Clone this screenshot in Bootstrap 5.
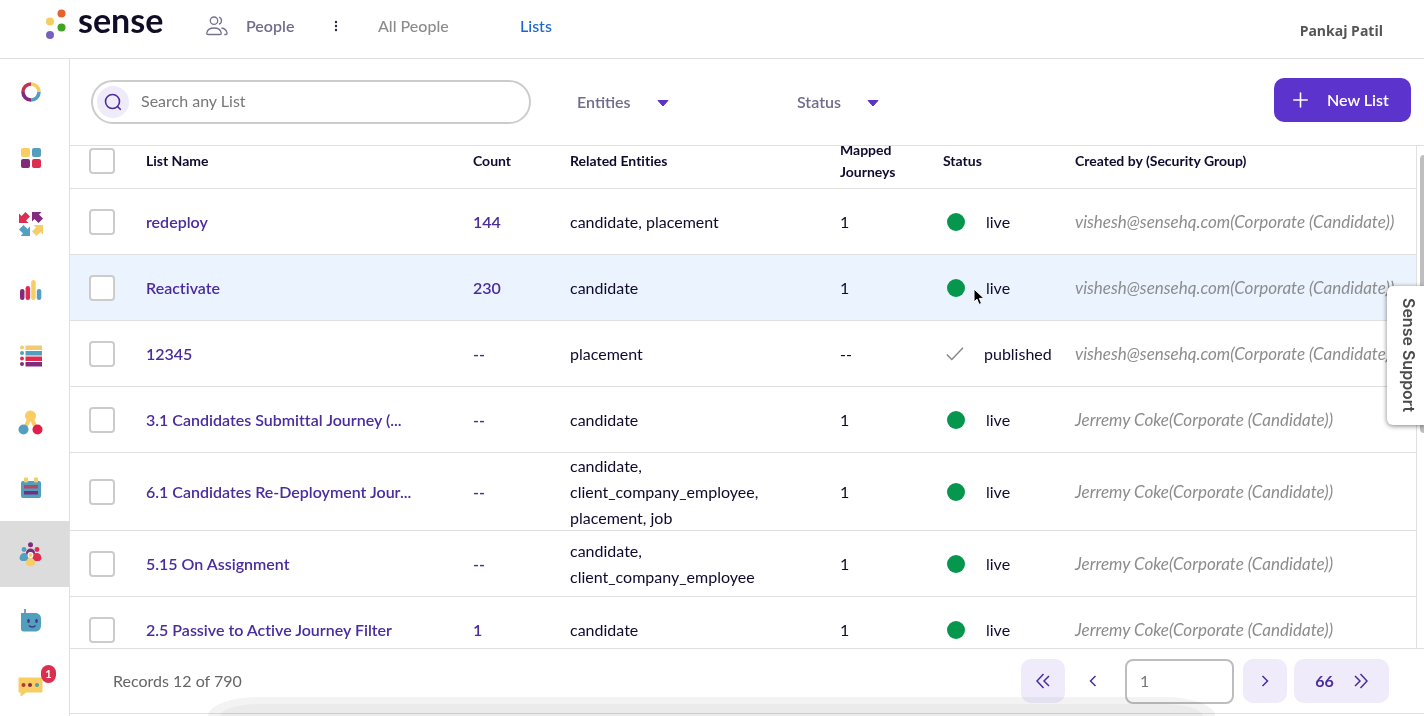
<!DOCTYPE html>
<html lang="en">
<head>
<meta charset="utf-8">
<meta name="viewport" content="width=device-width, initial-scale=1">
<title>Sense - Lists</title>
<link href="https://cdn.jsdelivr.net/npm/bootstrap@5.3.0/dist/css/bootstrap.min.css" rel="stylesheet">
<style>
  :root { --line: #e0e0e0; --ink: #0f0a2e; --violet: #4a2c9e; --mute: #706c8c; --soft: #efebfb; }
  body { font-family: Lato, sans-serif; font-size: 16px; color: var(--ink); background: #fff; font-variant-ligatures: none; }
  a { text-decoration: none; }
  button { border: 0; }

  .topbar { height: 59px; border-bottom: 1px solid var(--line); padding: 0 41px 0 45px; }
  .brand { gap: 12px; width: 161px; height: 42px; color: #100c26; }
  .brand-name { font-size: 34px; line-height: 40px; font-weight: 700; }
  .crumbs { height: 52px; font-weight: 600; }
  .crumb-people { gap: 18px; width: 127px; color: var(--mute); }
  .crumb-more { width: 45px; padding: 0; background: none; text-align: left; }
  .crumb-all { width: 142px; color: #8c8c8c; font-weight: 500; }
  .crumb-lists { color: #1a66cf; font-weight: 500; }
  .user-name { color: #555; font-family: "Open Sans", sans-serif; font-size: 14px; font-weight: 700; padding-top: 3px; }

  .page-body, .list-area { min-height: 0; }
  .page-main { min-width: 0; }

  .sidebar { width: 70px; border-right: 1px solid var(--line); }
  .side-item { height: 66px; padding-right: 8px; position: relative; }
  .side-item.current { background: #dcdcdc; }
  .alert-count { position: absolute; left: 41px; top: 12px; width: 15px; height: 18px; border-radius: 8px; background: #dc2f50; color: #fff; font-size: 11px; font-weight: 700; line-height: 18px; text-align: center; }

  .toolbar { height: 87px; border-bottom: 1px solid var(--line); padding: 0 13px 0 21px; }
  .search-box { width: 440px; height: 44px; border: 2px solid #ccc; border-radius: 22px; padding: 0 16px 0 4px; gap: 12px; margin-right: 46px; }
  .search-box input { border: 0; outline: 0; min-width: 0; color: #666; font-size: 16px; padding: 0 0 2px; }
  .search-box input::placeholder, .page-no::placeholder { color: #777; opacity: 1; }
  .search-dot { width: 32px; height: 32px; border-radius: 50%; background: var(--soft); }
  .filter { width: 220px; }
  .filter select { appearance: none; border: 0; padding: 0 38px 0 0; font-weight: 600; color: var(--mute);
    background: url("data:image/svg+xml,%3Csvg xmlns='http://www.w3.org/2000/svg' width='12' height='8'%3E%3Cpath d='M1 1.500h10L6 7z' fill='%235b34c4' stroke='%235b34c4' stroke-linejoin='round'/%3E%3C/svg%3E") no-repeat right 9px; }
  .new-list { width: 137px; height: 44px; border-radius: 10px; background: #5c33cc; color: #fff; font-weight: 600; padding: 0 0 0 19px; gap: 19px; }

  .list-area { padding-right: 7px; }
  .list-frame { overflow: hidden; border-right: 1px solid var(--line); }
  .lists { width: 100%; table-layout: fixed; border-collapse: separate; border-spacing: 0; margin-top: -12px; }
  .lists th, .lists td { padding: 0; box-shadow: inset 0 -1px var(--line); white-space: nowrap; }
  .lists th { height: 55px; padding-bottom: 2px; font-size: 14px; line-height: 22px; font-weight: 700; white-space: normal; }
  .lists td { height: 66px; line-height: 26px; }
  .lists td:nth-child(4) { white-space: normal; }
  .lists tr.hovered td { background: #ebf3ff; }
  .lists a { color: var(--violet); font-weight: 600; }
  .lists td:last-child { color: #8c8c8c; font-size: 17px; font-style: italic; }
  .c-check { width: 76px; } .c-name { width: 327px; } .c-count { width: 97px; }
  .c-entities { width: 270px; } .c-journeys { width: 103px; } .c-status { width: 132px; }
  .tick { appearance: none; display: block; width: 26px; height: 26px; margin: 0 0 0 19px; border: 2px solid #ccc; border-radius: 4px; background: #fff; }
  .live { gap: 21px; padding-left: 4px; }
  .live::before { content: ""; width: 18px; height: 18px; border-radius: 50%; background: #07964d; }
  .published { gap: 20px; padding-left: 3px; }
  .scroll-thumb { position: absolute; right: 0; top: 9px; width: 4px; height: 278px; background: #bfbfbf; border-radius: 4px 0 0 4px; }

  .pager { height: 66px; border-top: 1px solid var(--line); border-bottom: 1px solid var(--line); padding: 0 35px 0 43px; margin-bottom: 2px; position: relative; color: #666; }
  .page-btn { width: 44px; height: 44px; border-radius: 10px; background: var(--soft); color: var(--violet); padding: 0; }
  .page-btn.plain { background: none; width: 56px; }
  .page-btn.wide { width: 95px; gap: 20px; font-weight: 700; margin-left: 7px; }
  .page-no { width: 109px; height: 45px; border: 2px solid #bdbdbd; border-radius: 8px; padding: 0 13px 2px; color: #777; margin: 0 9px 0 4px; }
  .dock-shade { position: absolute; left: 138px; right: 209px; top: 48px; height: 19px; overflow: hidden; pointer-events: none; mix-blend-mode: multiply; background: #f3f3f3; border-radius: 50px 50px 0 0 / 19px 19px 0 0; }
  .dock-shade::after { content: ""; position: absolute; inset: 7px 12px 0; background: #ebebeb; border-radius: 40px 40px 0 0 / 12px 12px 0 0; }

  .support { position: fixed; right: 0; top: 286px; width: 37px; height: 139px; padding: 0 0 0 6px; background: #fff; color: #4a4a4a; border-radius: 6px 0 0 6px; box-shadow: 0 1px 5px rgba(0,0,0,.5); writing-mode: vertical-rl; font: 600 16px Inter, sans-serif; line-height: 30px; }
  .pointer { position: absolute; left: 903px; top: 142px; }
</style>
</head>
<body>
<div class="d-flex flex-column vh-100 overflow-hidden">
  <header class="topbar d-flex justify-content-between flex-shrink-0">
    <div class="d-flex">
      <a href="#" class="brand d-flex">
        <svg width="21" height="42" viewBox="0 0 21 42"><circle cx="16.500" cy="13.500" r="4" fill="#e4622c"/><circle cx="5" cy="21.500" r="4" fill="#f7cd62"/><circle cx="16.500" cy="27.500" r="4" fill="#41a322"/><circle cx="5" cy="35" r="4" fill="#7860c3"/></svg>
        <span class="brand-name">sense</span>
      </a>
      <nav class="crumbs d-flex align-items-center">
        <a href="#" class="crumb-people d-flex align-items-center">
          <svg width="22" height="20" viewBox="0 0 22 20" fill="none" stroke="#77738f" stroke-width="1.300"><circle cx="8" cy="4.700" r="3.700"/><path d="M2 18.500h12c1 0 1.400-.7 1.200-1.600-.6-3-3-4.900-7.200-4.900S1.400 13.900.8 16.900c-.2.900.2 1.600 1.200 1.600zM13 1.200a3.700 3.700 0 0 1 0 7M15.500 12c3 .4 4.900 2 5.500 4.900.2 1-.2 1.600-1.200 1.600h-1.500"/></svg>
          <span>People</span>
        </a>
        <button class="crumb-more" aria-label="More"><svg width="6" height="12" viewBox="0 0 6 12" class="d-block"><g fill="#28243c"><circle cx="3" cy="2" r="1.200"/><circle cx="3" cy="6" r="1.200"/><circle cx="3" cy="10" r="1.200"/></g></svg></button>
        <a href="#" class="crumb-all">All People</a>
        <a href="#" class="crumb-lists">Lists</a>
      </nav>
    </div>
    <div class="user-name d-flex align-items-center">Pankaj Patil</div>
  </header>

  <div class="page-body d-flex flex-fill">
    <nav class="sidebar flex-shrink-0">
      <a href="#" class="side-item d-flex align-items-center justify-content-center" aria-label="Home">
        <svg width="22" height="22" viewBox="0 0 22 22" fill="none" stroke-width="3.600"><path d="M11 3a8 8 0 0 1 8 8" stroke="#f8cd63"/><path d="M19 11a8 8 0 0 1-8 8" stroke="#549fc0"/><path d="M11 19a8 8 0 0 1-8-8" stroke="#822b7c"/><path d="M3 11a8 8 0 0 1 8-8" stroke="#c5344f"/></svg></a>
      <a href="#" class="side-item d-flex align-items-center justify-content-center" aria-label="Dashboard">
        <svg width="20" height="20" viewBox="0 0 20 20"><rect width="9" height="9" rx="2" fill="#f8cd63"/><rect x="11" width="9" height="9" rx="2" fill="#549fc0"/><rect y="11" width="9" height="9" rx="2" fill="#822b7c"/><rect x="11" y="11" width="9" height="9" rx="2" fill="#df2d50"/></svg></a>
      <a href="#" class="side-item d-flex align-items-center justify-content-center" aria-label="Journeys">
        <svg width="26" height="26" viewBox="0 0 26 26"><path d="M1 12V2.500L3.500 5 7.500 1l4.500 4.500-4 4 2.500 2.500z" fill="#df2d50"/><path d="M14 1h9.500L21 3.500l4 4L20.500 12l-4-4L14 10.500z" fill="#822b7c"/><path d="M12 25H2.500L5 22.500l-4-4L5.500 14l4 4 2.500-2.500z" fill="#549fc0"/><path d="M25 14v9.500L22.500 21l-4 4L14 20.500l4-4-2.500-2.500z" fill="#f8cd63"/></svg></a>
      <a href="#" class="side-item d-flex align-items-center justify-content-center" aria-label="Analytics">
        <svg width="22" height="20" viewBox="0 0 22 20"><rect y="9" width="4.500" height="11" rx="2.200" fill="#822b7c"/><rect x="5.600" y="6" width="4.500" height="14" rx="2.200" fill="#df2d50"/><rect x="11.200" width="4.500" height="20" rx="2.200" fill="#f8cd63"/><rect x="16.800" y="9" width="4.500" height="11" rx="2.200" fill="#549fc0"/></svg></a>
      <a href="#" class="side-item d-flex align-items-center justify-content-center" aria-label="Surveys">
        <svg width="22" height="22" viewBox="0 0 22 22"><g fill="#efcb73"><circle cx="2" cy="2.500" r="2"/><path d="M5.500.5H22v4.500H5.500z"/></g><g fill="#549fc0"><circle cx="2" cy="8" r="2"/><path d="M5.500 6H22v4.500H5.500z"/></g><g fill="#df2d50"><circle cx="2" cy="13.500" r="2"/><path d="M5.500 11.500H22V16H5.500z"/></g><g fill="#822b7c"><circle cx="2" cy="19" r="2"/><path d="M5.500 17H22v4.500H5.500z"/></g></svg></a>
      <a href="#" class="side-item d-flex align-items-center justify-content-center" aria-label="Referrals">
        <svg width="25" height="25" viewBox="0 0 25 25"><path d="M8 16l4.500-10L17 16" fill="none" stroke="#f8cd63" stroke-width="4"/><circle cx="12.500" cy="6" r="5.500" fill="#f8cd63"/><circle cx="5.500" cy="19.500" r="5" fill="#549fc0"/><circle cx="19.500" cy="19.500" r="5" fill="#df2048"/></svg></a>
      <a href="#" class="side-item d-flex align-items-center justify-content-center" aria-label="Calendar">
        <svg width="20" height="22" viewBox="0 0 20 22"><rect y="4" width="20" height="17" rx="2" fill="#4f9fbd"/><path d="M3 8h14v3.500H3z" fill="#b74767"/><path d="M3 14h14v3.500H3z" fill="#6e3186"/><path d="M3.500 1h3v4h-3zM13.500 1h3v4h-3z" fill="#f3cc6b" stroke="#f3cc6b"/></svg></a>
      <a href="#" class="side-item current d-flex align-items-center justify-content-center" aria-label="People">
        <svg width="23" height="25" viewBox="0 0 23 25"><g fill="#822b7c"><circle cx="11.500" cy="2.800" r="2.500"/><path d="M7 11c0-6 9-6 9 0l-1 3H8z"/></g><g fill="#549fc0"><circle cx="5" cy="7.500" r="2.400"/><path d="M.5 17c0-8 9-8 9-.5L7 19H2.500z"/></g><g fill="#df2d50"><circle cx="18" cy="7.500" r="2.400"/><path d="M22.500 17c0-8-9-8-9-.5L16 19h4.500z"/></g><circle cx="11.500" cy="13" r="3" fill="#fff"/><circle cx="11.500" cy="13" r="2" fill="#f8cd63"/><path d="M7 21.500c0-7 9-7 9 0 0 3.500-9 3.500-9 0z" fill="#f8cd63"/></svg></a>
      <a href="#" class="side-item d-flex align-items-center justify-content-center" aria-label="Chatbot">
        <svg width="20" height="24" viewBox="0 0 20 24"><path d="M0 5h14c4 0 6 2.500 6 6v6c0 4-2 6.500-6 6.500H2.500C1 23.500 0 22.500 0 21z" fill="#4f9fbd"/><path d="M4 5V1" stroke="#4f7fa5" stroke-width="1.500"/><ellipse cx="7.500" cy="13" rx="1.300" ry="2" fill="#4b2e83"/><ellipse cx="15.500" cy="13" rx="1.300" ry="2" fill="#4b2e83"/><path d="M8 17.500c1.500 2 5 2 6.500 0" fill="none" stroke="#4b2e83" stroke-width="1.300"/></svg></a>
      <a href="#" class="side-item d-flex align-items-center justify-content-center" aria-label="Messages">
        <svg width="25" height="19" viewBox="0 0 25 19"><path d="M1 1h23v14H8l-5 4V15H1z" fill="#f8cd63" stroke="#f8cd63" stroke-linejoin="round"/><circle cx="5.500" cy="8" r="2" fill="#b53b3b"/><circle cx="12" cy="8" r="2" fill="#822b4c"/><circle cx="19" cy="8" r="2" fill="#549fa0"/></svg>
        <span class="alert-count">1</span></a>
    </nav>

    <main class="page-main d-flex flex-column flex-fill">
      <div class="toolbar d-flex align-items-center flex-shrink-0">
        <div class="search-box d-flex align-items-center">
          <span class="search-dot d-flex align-items-center justify-content-center flex-shrink-0"><svg width="18" height="18" viewBox="0 0 18 18" fill="none" stroke="#4b2c9e" stroke-width="1.600" stroke-linecap="round"><circle cx="8.500" cy="8.500" r="7"/><path d="M13.500 13.500l2.800 2.800"/></svg></span>
          <input type="search" class="flex-fill" placeholder="Search any List" aria-label="Search any List">
        </div>
        <div class="filter"><select aria-label="Entities"><option>Entities</option></select></div>
        <div class="filter"><select aria-label="Status"><option>Status</option></select></div>
        <button class="new-list d-flex align-items-center ms-auto mb-1">
          <svg width="15" height="16" viewBox="0 0 15 16" stroke="#fff" stroke-width="1.600" stroke-linecap="round"><path d="M7.500 1v14M.8 8h13.400"/></svg>
          <span>New List</span>
        </button>
      </div>

      <div class="list-area d-flex flex-fill position-relative">
        <div class="list-frame flex-fill">
          <table class="lists">
            <colgroup><col class="c-check"><col class="c-name"><col class="c-count"><col class="c-entities"><col class="c-journeys"><col class="c-status"><col></colgroup>
            <thead>
              <tr><th><input type="checkbox" class="tick" aria-label="Select all"></th><th>List Name</th><th>Count</th><th>Related Entities</th><th>Mapped<br>Journeys</th><th>Status</th><th>Created by (Security Group)</th></tr>
            </thead>
            <tbody>
              <tr><td><input type="checkbox" class="tick" aria-label="redeploy"></td><td><a href="#">redeploy</a></td><td><a href="#">144</a></td><td>candidate, placement</td><td>1</td><td><div class="live d-flex align-items-center">live</div></td><td>vishesh@sensehq.com(Corporate (Candidate))</td></tr>
              <tr class="hovered"><td><input type="checkbox" class="tick" aria-label="Reactivate"></td><td><a href="#">Reactivate</a></td><td><a href="#">230</a></td><td>candidate</td><td>1</td><td><div class="live d-flex align-items-center">live</div></td><td>vishesh@sensehq.com(Corporate (Candidate))</td></tr>
              <tr><td><input type="checkbox" class="tick" aria-label="12345"></td><td><a href="#">12345</a></td><td><a href="#">--</a></td><td>placement</td><td>--</td><td><div class="published d-flex align-items-center"><svg width="18" height="14" viewBox="0 0 18 14" fill="none" stroke="#858585" stroke-width="1.400"><path d="M.8 7.500l5 5L17 .8"/></svg>published</div></td><td>vishesh@sensehq.com(Corporate (Candidate))</td></tr>
              <tr><td><input type="checkbox" class="tick" aria-label="3.1 Candidates Submittal Journey"></td><td><a href="#">3.1 Candidates Submittal Journey (...</a></td><td><a href="#">--</a></td><td>candidate</td><td>1</td><td><div class="live d-flex align-items-center">live</div></td><td>Jerremy Coke(Corporate (Candidate))</td></tr>
              <tr><td><input type="checkbox" class="tick" aria-label="6.1 Candidates Re-Deployment Journey"></td><td><a href="#">6.1 Candidates Re-Deployment Jour...</a></td><td><a href="#">--</a></td><td>candidate,<br>client_company_employee,<br>placement, job</td><td>1</td><td><div class="live d-flex align-items-center">live</div></td><td>Jerremy Coke(Corporate (Candidate))</td></tr>
              <tr><td><input type="checkbox" class="tick" aria-label="5.15 On Assignment"></td><td><a href="#">5.15 On Assignment</a></td><td><a href="#">--</a></td><td>candidate,<br>client_company_employee</td><td>1</td><td><div class="live d-flex align-items-center">live</div></td><td>Jerremy Coke(Corporate (Candidate))</td></tr>
              <tr><td><input type="checkbox" class="tick" aria-label="2.5 Passive to Active Journey Filter"></td><td><a href="#">2.5 Passive to Active Journey Filter</a></td><td><a href="#">1</a></td><td>candidate</td><td>1</td><td><div class="live d-flex align-items-center">live</div></td><td>Jerremy Coke(Corporate (Candidate))</td></tr>
            </tbody>
          </table>
        </div>
        <div class="scroll-thumb"></div>
        <svg class="pointer" width="13" height="18" viewBox="0 0 13 18"><path d="M1 1v13l3-2.800 2 5.200 2.500-1-2.100-5H11z" fill="#000" stroke="#fff"/></svg>
      </div>

      <footer class="pager d-flex align-items-center flex-shrink-0">
        <span class="me-auto">Records 12 of 790</span>
        <button class="page-btn d-flex align-items-center justify-content-center" aria-label="First page"><svg width="14" height="16" viewBox="0 0 14 16" fill="none" stroke="currentColor" stroke-width="1.500"><path d="M7.500 1L1 8l6.500 7M13 3L8 8l5 5"/></svg></button>
        <button class="page-btn plain d-flex align-items-center justify-content-center" aria-label="Previous page"><svg width="8" height="12" viewBox="0 0 8 12" fill="none" stroke="currentColor" stroke-width="1.500"><path d="M6.500 1L1.500 6l5 5"/></svg></button>
        <input class="page-no" type="text" placeholder="1" aria-label="Page number">
        <button class="page-btn d-flex align-items-center justify-content-center" aria-label="Next page"><svg width="8" height="12" viewBox="0 0 8 12" fill="none" stroke="currentColor" stroke-width="1.500"><path d="M1.500 1l5 5-5 5"/></svg></button>
        <button class="page-btn wide d-flex align-items-center justify-content-center" aria-label="Last page, 66"><span>66</span><svg width="14" height="16" viewBox="0 0 14 16" fill="none" stroke="currentColor" stroke-width="1.500"><path d="M6.500 1L13 8l-6.500 7M1 3l5 5-5 5"/></svg></button>
        <div class="dock-shade"></div>
      </footer>
    </main>
  </div>
</div>
<button class="support">Sense Support</button>
<script src="https://cdn.jsdelivr.net/npm/bootstrap@5.3.0/dist/js/bootstrap.bundle.min.js"></script>
</body>
</html>
